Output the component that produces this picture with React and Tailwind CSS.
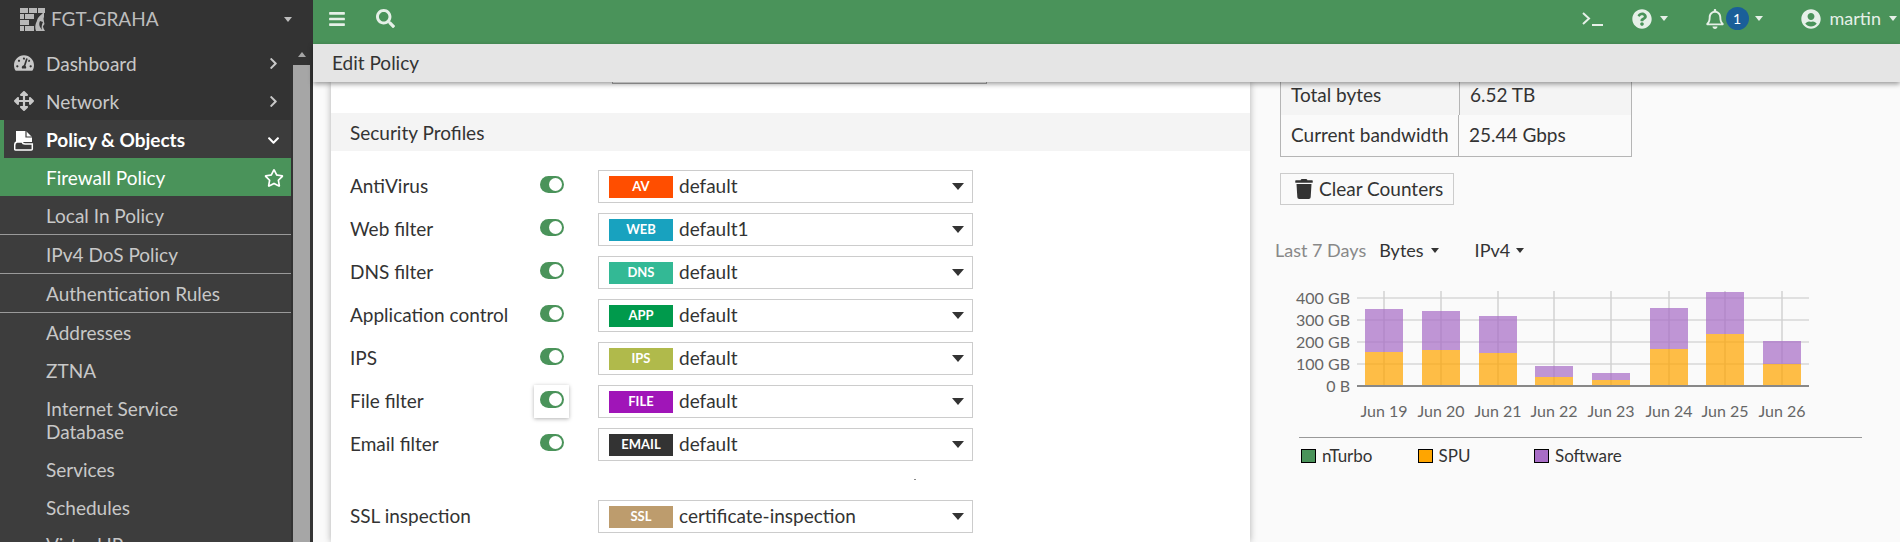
import React from "react";
import { FaTachometerAlt, FaArrowsAlt, FaChevronRight, FaChevronDown, FaRegStar, FaBars, FaSearch, FaQuestionCircle, FaRegBell, FaUserCircle, FaTrash } from "react-icons/fa";

const FONT = { fontFamily: "Lato, 'Noto Sans', sans-serif" };

const PROFILES = [
  { label: "AntiVirus", tag: "AV", color: "bg-[#ff4e00]", value: "default" },
  { label: "Web filter", tag: "WEB", color: "bg-[#18a2bf]", value: "default1" },
  { label: "DNS filter", tag: "DNS", color: "bg-[#33b995]", value: "default" },
  { label: "Application control", tag: "APP", color: "bg-[#009a4c]", value: "default" },
  { label: "IPS", tag: "IPS", color: "bg-[#b0ba4b]", value: "default" },
  { label: "File filter", tag: "FILE", color: "bg-[#a015b8]", value: "default", focused: true },
  { label: "Email filter", tag: "EMAIL", color: "bg-[#333333]", value: "default" },
];

// top of each stack in chart coords: software top, spu top
const BARS = [
  { day: "Jun 19", x: 104, sw: 29, spu: 72 },
  { day: "Jun 20", x: 161, sw: 31, spu: 70 },
  { day: "Jun 21", x: 218, sw: 36, spu: 73 },
  { day: "Jun 22", x: 274, sw: 86, spu: 97 },
  { day: "Jun 23", x: 331, sw: 93, spu: 100 },
  { day: "Jun 24", x: 389, sw: 28, spu: 69 },
  { day: "Jun 25", x: 445, sw: 12, spu: 54 },
  { day: "Jun 26", x: 502, sw: 61, spu: 84 },
];
const GRID = [
  { y: 18, label: "400 GB" },
  { y: 40, label: "300 GB" },
  { y: 62, label: "200 GB" },
  { y: 84, label: "100 GB" },
];
const BASE = 106;

function Logo() {
  return (
    <svg width="26" height="23" viewBox="0 0 26 23" fill="#b8b8b8">
      <rect x="0" y="0" width="8" height="5" />
      <rect x="9" y="0" width="8" height="5" />
      <rect x="18" y="0" width="7" height="5" />
      <rect x="0" y="6" width="4" height="5" />
      <rect x="5" y="6" width="9" height="5" />
      <rect x="0" y="12" width="9" height="5" />
      <rect x="0" y="18" width="4" height="5" />
      <rect x="5" y="18" width="9" height="5" />
      <path d="M24 3c-1 3-4 4-6 7-1 2-1 3-2 5-1 3-1 5 0 8h9c-1-2-2-3-2-5 1-1 2-2 1-4 0-2-1-3 0-5z" />
      <path d="M20 13c-1 2-1 4 0 6l2 3c-1-3 0-6 1-8z" fill="#333333" />
    </svg>
  );
}

function PolicyIcon() {
  return (
    <svg width="20" height="21" viewBox="0 0 20 21">
      <path d="M2 1h10l6 6v5H2z" fill="#fff" />
      <path d="M12 1v6h6" fill="none" stroke="#3c3c3c" strokeWidth="1.2" />
      <path d="M1.700 20a1 1 0 0 1-1-1v-3.500c0-2 1-3.500 2.500-3.500h4.800c.5 1.500 1.500 2 3 2h7.300v5a1 1 0 0 1-1 1z" fill="#3c3c3c" stroke="#fff" strokeWidth="1.5" />
    </svg>
  );
}

function NavItem({ children, icon, chevron, border, className = "h-[38px]" }) {
  return (
    <div className={`shrink-0 flex items-center pl-[46px] pr-[11px] text-[19px] leading-[23px] text-[#c8c8c8] relative ${border ? "border-b border-[#9a9a9a]" : ""} ${className}`}>
      {icon && <span className="absolute left-[14px] text-[#c8c8c8]">{icon}</span>}
      <span>{children}</span>
      {chevron && <FaChevronRight className="ml-auto text-[#c8c8c8]" size={13} />}
    </div>
  );
}

function Sidebar() {
  return (
    <aside className="w-[313px] shrink-0 bg-[#333333] flex flex-col">
      <div className="h-[44px] shrink-0 flex items-center pb-[5px] pl-[20px] pr-[21px] text-[#bdbdbd] text-[19px]">
        <Logo />
        <span className="ml-[5px]">FGT-GRAHA</span>
        <span className="ml-auto w-0 h-0 border-x-[4px] border-t-[5px] border-x-transparent border-t-[#bdbdbd]" />
      </div>
      <div className="flex flex-1 min-h-0">
        <nav className="w-[291px] shrink-0 flex flex-col overflow-hidden">
          <NavItem icon={<FaTachometerAlt size={20} />} chevron>Dashboard</NavItem>
          <NavItem icon={<FaArrowsAlt size={20} />} chevron>Network</NavItem>
          <div className="h-[38px] shrink-0 flex items-center bg-[#3c3c3c] border-l-[4px] border-[#4a935a] pl-[42px] pt-[2px] pr-[11px] text-white font-bold text-[19px] relative">
            <span className="absolute left-[10px]"><PolicyIcon /></span>
            Policy &amp; Objects
            <FaChevronDown className="ml-auto" size={13} />
          </div>
          <div className="h-[38px] shrink-0 flex items-center bg-[#4a935a] pl-[46px] pt-[2px] pr-[7px] text-white text-[19px]">
            Firewall Policy
            <FaRegStar className="ml-auto" size={20} />
          </div>
          <div className="bg-[#3d3d3d] flex-1">
            <NavItem border className="h-[39px]">Local In Policy</NavItem>
            <NavItem border className="h-[39px]">IPv4 DoS Policy</NavItem>
            <NavItem border className="h-[39px]">Authentication Rules</NavItem>
            <NavItem>Addresses</NavItem>
            <NavItem>ZTNA</NavItem>
            <NavItem className="h-[61px]">Internet Service<br />Database</NavItem>
            <NavItem>Services</NavItem>
            <NavItem>Schedules</NavItem>
            <NavItem className="h-[25px] items-start pt-[7px] overflow-hidden">Virtual IPs</NavItem>
          </div>
        </nav>
        <div className="w-[17px] ml-[2px] flex flex-col shrink-0">
          <div className="h-[21px] flex items-center justify-center">
            <span className="w-0 h-0 border-x-[4px] border-b-[5px] border-x-transparent border-b-[#a6a6a6]" />
          </div>
          <div className="flex-1 bg-[#a6a6a6]" />
        </div>
      </div>
    </aside>
  );
}

function Caret({ className = "" }) {
  return <span className={`inline-block w-0 h-0 border-x-[4px] border-t-[5px] border-x-transparent ${className}`} />;
}

function TopBar() {
  return (
    <header className="h-[44px] shrink-0 bg-[#4a935a] flex items-center pb-[7px] text-[#e6f0e8]">
      <FaBars className="ml-[15px]" size={18} />
      <FaSearch className="ml-[30px]" size={19} />
      <svg className="ml-auto" width="21" height="14" viewBox="0 0 21 14" fill="none" stroke="#e6f0e8" strokeWidth="2">
        <path d="M1 1l6 5.500-6 5.500" />
        <path d="M10 13h11" />
      </svg>
      <FaQuestionCircle className="ml-[29px]" size={20} />
      <Caret className="ml-[8px] border-t-[#e6f0e8]" />
      <FaRegBell className="ml-[37px]" size={20} />
      <span className="ml-[1px] w-[23px] h-[23px] rounded-full bg-[#1a5f99] text-white text-[14px] flex items-center justify-center">1</span>
      <Caret className="ml-[6px] border-t-[#e6f0e8]" />
      <FaUserCircle className="ml-[38px]" size={20} />
      <span className="ml-[9px] text-[18px]">martin</span>
      <Caret className="ml-[8px] mr-[3px] border-t-[#e6f0e8]" />
    </header>
  );
}

function Toggle() {
  return (
    <span className="w-[24px] h-[17px] rounded-full bg-[#4a935a] flex items-center justify-end pr-[2px]">
      <span className="w-[13px] h-[13px] rounded-full bg-white" />
    </span>
  );
}

function ProfileSelect({ tag, color, value, className = "ml-[29px]" }) {
  return (
    <div className={`w-[375px] h-[33px] border border-[#cccccc] flex items-center text-[19px] text-[#333333] ${className}`}>
      <span className={`ml-[10px] w-[64px] h-[22px] flex items-center justify-center text-white text-[13px] font-bold ${color}`}>{tag}</span>
      <span className="ml-[6px]">{value}</span>
      <span className="ml-auto mr-[8px] w-0 h-0 border-x-[6px] border-t-[7px] border-x-transparent border-t-[#333333]" />
    </div>
  );
}

function PolicyPanel() {
  return (
    <section className="w-[919px] ml-[18px] shrink-0 bg-white relative z-[1] shadow-[0_0_7px_rgba(0,0,0,0.3)]">
      <div className="ml-[281px] w-[375px] h-[2px] border-x border-b border-[#aaaaaa]" />
      <div className="mt-[29px] h-[38px] pt-[2px] bg-[#f4f4f4] flex items-center pl-[19px] text-[19px] text-[#333333]">Security Profiles</div>
      <div className="mt-[19px] flex flex-col gap-[10px]">
        {PROFILES.map((p) => (
          <div key={p.label} className="flex items-center pl-[19px] h-[33px]">
            <span className="w-[184px] text-[19px] text-[#333333] whitespace-nowrap">{p.label}</span>
            <span className={`w-[35px] h-[33px] pt-[6px] flex justify-center ${p.focused ? "shadow-[0_1px_4px_rgba(0,0,0,0.3)]" : ""}`}>
              <Toggle />
            </span>
            <ProfileSelect tag={p.tag} color={p.color} value={p.value} />
          </div>
        ))}
      </div>
      <div className="h-[39px] pt-[18px] pl-[583px]">
        <div className="w-[2px] h-[1px] bg-[#888888]" />
      </div>
      <div className="flex items-center pl-[19px] h-[33px]">
        <span className="w-[248px] text-[19px] text-[#333333]">SSL inspection</span>
        <ProfileSelect tag="SSL" color="bg-[#bd9c6d]" value="certificate-inspection" className="" />
      </div>
    </section>
  );
}

function BandwidthChart() {
  return (
    <svg width="560" height="145" className="block mt-[18px]" style={FONT}>
      {GRID.map((g) => (
        <g key={g.y}>
          <line x1="77" x2="529" y1={g.y} y2={g.y} stroke="#e0e0e0" strokeWidth="2" />
          <text x="70" y={g.y + 6} textAnchor="end" fontSize="16" fill="#666666">{g.label}</text>
        </g>
      ))}
      <text x="70" y={BASE + 6} textAnchor="end" fontSize="16" fill="#666666">0 B</text>
      {BARS.map((b) => (
        <line key={b.day} x1={b.x} x2={b.x} y1="11" y2={BASE} stroke="#d2d2d2" strokeWidth="1.5" />
      ))}
      {BARS.map((b) => (
        <g key={b.day}>
          <rect x={b.x - 19} y={b.sw} width="38" height={b.spu - b.sw} fill="#a86dc6" fillOpacity="0.72" />
          <rect x={b.x - 19} y={b.spu} width="38" height={BASE - b.spu} fill="#ffa500" fillOpacity="0.72" />
          <text x={b.x} y="137" textAnchor="middle" fontSize="16" fill="#666666">{b.day}</text>
        </g>
      ))}
      <line x1="77" x2="529" y1={BASE} y2={BASE} stroke="#888888" strokeWidth="2" />
    </svg>
  );
}

function Legend() {
  const items = [
    { name: "nTurbo", color: "bg-[#4a935a]" },
    { name: "SPU", color: "bg-[#ffa500]" },
    { name: "Software", color: "bg-[#a86dc6]" },
  ];
  return (
    <div className="ml-[19px] mt-[12px] w-[563px] border-t border-[#999999] pt-[11px] flex text-[17px] text-[#333333] pl-[2px]">
      {items.map((i) => (
        <div key={i.name} className="w-[116.5px] flex items-center h-[14px]">
          <span className={`w-[15px] h-[14px] border border-black mr-[6px] ${i.color}`} />
          {i.name}
        </div>
      ))}
    </div>
  );
}

function StatsPane() {
  return (
    <section className="flex-1 bg-[#fafafa] pl-[30px] text-[19px] text-[#333333]">
      <div className="w-[352px] border-x border-b border-[#b5b5b5]">
        <div className="flex h-[33px] bg-[#f4f4f4] items-center pb-[6px]">
          <span className="w-[178px] flex items-center pl-[10px]">Total bytes</span>
          <span className="pl-[10px] border-l border-[#b5b5b5] h-[33px] -mb-[6px] flex items-center pb-[6px]">6.52 TB</span>
        </div>
        <div className="flex h-[41px] items-center">
          <span className="w-[178px] h-full flex items-center pl-[10px] border-r border-[#b5b5b5]">Current bandwidth</span>
          <span className="pl-[10px]">25.44 Gbps</span>
        </div>
      </div>
      <button className="mt-[16px] w-[174px] h-[32px] border border-[#cccccc] flex items-center pl-[13px]">
        <FaTrash size={20} />
        <span className="ml-[5px]">Clear Counters</span>
      </button>
      <div className="mt-[33px] h-[24px] -ml-[5px] flex items-center text-[18px]">
        <span className="text-[#888888]">Last 7 Days</span>
        <span className="ml-[13px]">Bytes</span>
        <Caret className="ml-[7px] border-t-[#333333]" />
        <span className="ml-[36px]">IPv4</span>
        <Caret className="ml-[6px] border-t-[#333333]" />
      </div>
      <BandwidthChart />
      <Legend />
    </section>
  );
}

export default function App() {
  return (
    <div className="h-[542px] w-[1900px] flex overflow-hidden" style={FONT}>
      <Sidebar />
      <main className="flex-1 flex flex-col min-w-0 bg-[#fafafa]">
        <TopBar />
        <div className="h-[38px] shrink-0 bg-[#e5e5e5] flex items-center pl-[19px] text-[19px] text-[#333333] relative z-10 shadow-[0_2px_5px_rgba(0,0,0,0.4)]">Edit Policy</div>
        <div className="flex flex-1 min-h-0 overflow-hidden">
          <PolicyPanel />
          <StatsPane />
        </div>
      </main>
    </div>
  );
}
